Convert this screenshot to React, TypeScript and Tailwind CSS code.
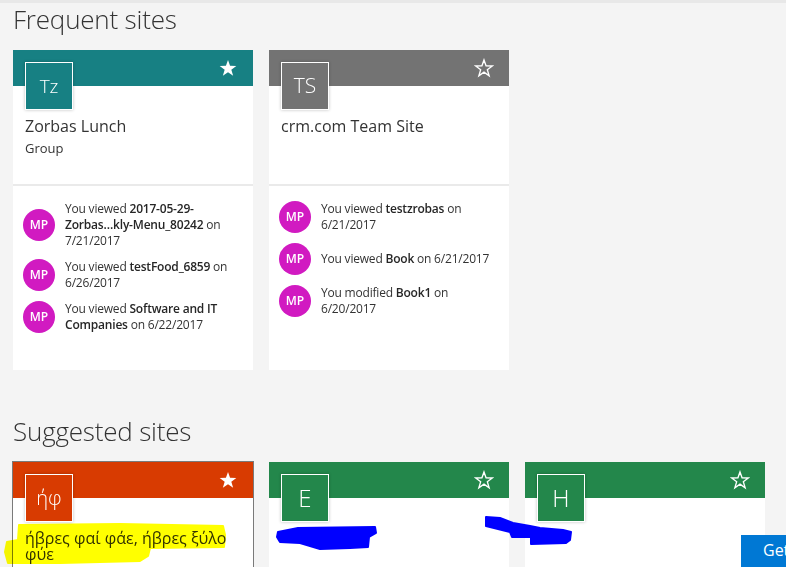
import React from "react";

function Star({ filled }: { filled: boolean }) {
  return (
    <svg width="20" height="20" viewBox="0 0 24 24" aria-hidden="true">
      <path
        d="M12 2.3 L14.47 9.4 L21.99 9.56 L15.99 14.1 L18.17 21.29 L12 17 L5.83 21.29 L8.01 14.1 L2.01 9.56 L9.53 9.4 Z"
        fill={filled ? "#ffffff" : "none"}
        stroke="#ffffff"
        strokeWidth={filled ? 0 : 1.6}
        strokeLinejoin="miter"
      />
    </svg>
  );
}

function Avatar() {
  return (
    <div className="w-8 h-8 shrink-0 rounded-full bg-[#d11ac1] text-white text-[12px] font-semibold flex items-center justify-center leading-none">
      MP
    </div>
  );
}

function Row({ children }: { children: React.ReactNode }) {
  return (
    <div className="flex items-center gap-[10px]">
      <Avatar />
      <div className="text-[12px] leading-4 tracking-[-0.2px] text-[#333333] whitespace-nowrap">{children}</div>
    </div>
  );
}

function B({ children }: { children: React.ReactNode }) {
  return <span className="font-semibold text-[#262626]">{children}</span>;
}

function CardTop({
  color,
  initials,
  initialsSize,
  starred,
  children,
}: {
  color: string;
  initials: string;
  initialsSize: string;
  starred: boolean;
  children?: React.ReactNode;
}) {
  return (
    <>
      <div className={`h-9 ${color} flex items-center justify-end pr-[15px]`}>
        <Star filled={starred} />
      </div>
      <div className="flex flex-col items-start px-3">
        <div
          className={`-mt-6 w-12 h-12 ${color} border border-white shadow-[0_0_3px_rgba(0,0,0,0.25)] flex items-center justify-center text-white font-light ${initialsSize}`}
        >
          {initials}
        </div>
        {children}
      </div>
    </>
  );
}

export default function App() {
  return (
    <div className="relative h-screen w-full overflow-hidden bg-[#f4f4f4] font-['Open_Sans','Noto_Sans',sans-serif] text-[#333333]">
      <div className="h-[3px] bg-[#e8e8e8]" />
      <div className="px-[13px]">
        <h2 className="text-[26px] leading-8 font-light tracking-[-0.2px] text-[#333333]">Frequent sites</h2>
        <div className="mt-[15px] flex gap-4">
          <div className="w-[240px] bg-white">
            <div className="h-[134px]">
              <CardTop color="bg-[#178083]" initials="Tz" initialsSize="text-[19px]" starred>
                <div className="mt-2 text-[16px] leading-4 text-[#333333]">Zorbas Lunch</div>
                <div className="mt-1.5 text-[13px] leading-4 text-[#333333]">Group</div>
              </CardTop>
            </div>
            <div className="h-[2px] bg-[#eaeaea]" />
            <div className="h-[184px] pt-[15px] px-[10px] flex flex-col gap-[10px]">
              <Row>
                You viewed <B>2017-05-29-</B>
                <br />
                <B>Zorbas…kly-Menu_80242</B> on
                <br />
                7/21/2017
              </Row>
              <Row>
                You viewed <B>testFood_6859</B> on
                <br />
                6/26/2017
              </Row>
              <Row>
                You viewed <B>Software and IT</B>
                <br />
                <B>Companies</B> on 6/22/2017
              </Row>
            </div>
          </div>

          <div className="w-[240px] bg-white">
            <div className="h-[134px]">
              <CardTop color="bg-[#737373]" initials="TS" initialsSize="text-[21px]" starred={false}>
                <div className="mt-2 text-[16px] leading-4 text-[#333333]">crm.com Team Site</div>
              </CardTop>
            </div>
            <div className="h-[2px] bg-[#eaeaea]" />
            <div className="h-[184px] pt-[15px] px-[10px] flex flex-col gap-[10px]">
              <Row>
                You viewed <B>testzrobas</B> on
                <br />
                6/21/2017
              </Row>
              <Row>
                You viewed <B>Book</B> on 6/21/2017
              </Row>
              <Row>
                You modified <B>Book1</B> on
                <br />
                6/20/2017
              </Row>
            </div>
          </div>
        </div>

        <h2 className="mt-[45px] text-[26px] leading-8 font-light tracking-[-0.2px] text-[#333333]">Suggested sites</h2>
        <div className="mt-[15px] flex gap-4">
          <div className="w-[240px] h-[200px] bg-white outline outline-1 outline-[#7a7a7a]">
            <CardTop color="bg-[#d83b01]" initials="ήφ" initialsSize="text-[20px]" starred>
              <div className="mt-2 text-[16px] leading-4 text-[#333333] whitespace-nowrap">
                ήβρες φαί φάε, ήβρες ξύλο
                <br />
                φύε
              </div>
            </CardTop>
          </div>
          <div className="w-[240px] h-[200px] bg-white">
            <CardTop color="bg-[#23874b]" initials="E" initialsSize="text-[24px]" starred={false} />
          </div>
          <div className="w-[240px] h-[200px] bg-white">
            <CardTop color="bg-[#23874b]" initials="H" initialsSize="text-[24px]" starred={false} />
          </div>
        </div>
      </div>

      <svg
        className="absolute left-0 top-0 pointer-events-none mix-blend-multiply"
        width="786"
        height="567"
        viewBox="0 0 786 567"
        aria-hidden="true"
      >
        <path
          d="M19,525 L120,524 L223,526 L225,535 L224,547 L150,548 L148,556 L140,561 L60,563 L8,563 L5,552 L7,542 L18,540 Z"
          fill="#ffff00"
          stroke="#ffff00"
          strokeWidth="2"
          strokeLinejoin="round"
        />
      </svg>
      <svg
        className="absolute left-0 top-0 pointer-events-none"
        width="786"
        height="567"
        viewBox="0 0 786 567"
        aria-hidden="true"
      >
        <path
          d="M278,532 L298,528 L375,527 L376,533 L369,537 L368,547 L350,548 L320,549 L300,543 L280,542 L277,537 Z"
          fill="#0000ff"
          stroke="#0000ff"
          strokeWidth="2"
          strokeLinejoin="round"
        />
        <path
          d="M486,517 L500,518 L513,523 L530,526 L540,528 L563,530 L571,532 L570,540 L566,543 L531,544 L531,537 L512,537 L510,532 L486,526 Z"
          fill="#0000ff"
          stroke="#0000ff"
          strokeWidth="2"
          strokeLinejoin="round"
        />
      </svg>

      <div className="absolute left-[741px] top-[535px] h-[40px] bg-[#0078d4] pl-[22px] pr-4 pt-[7px] text-[16px] leading-4 text-white whitespace-nowrap">
        Get the mobile app
      </div>
    </div>
  );
}
